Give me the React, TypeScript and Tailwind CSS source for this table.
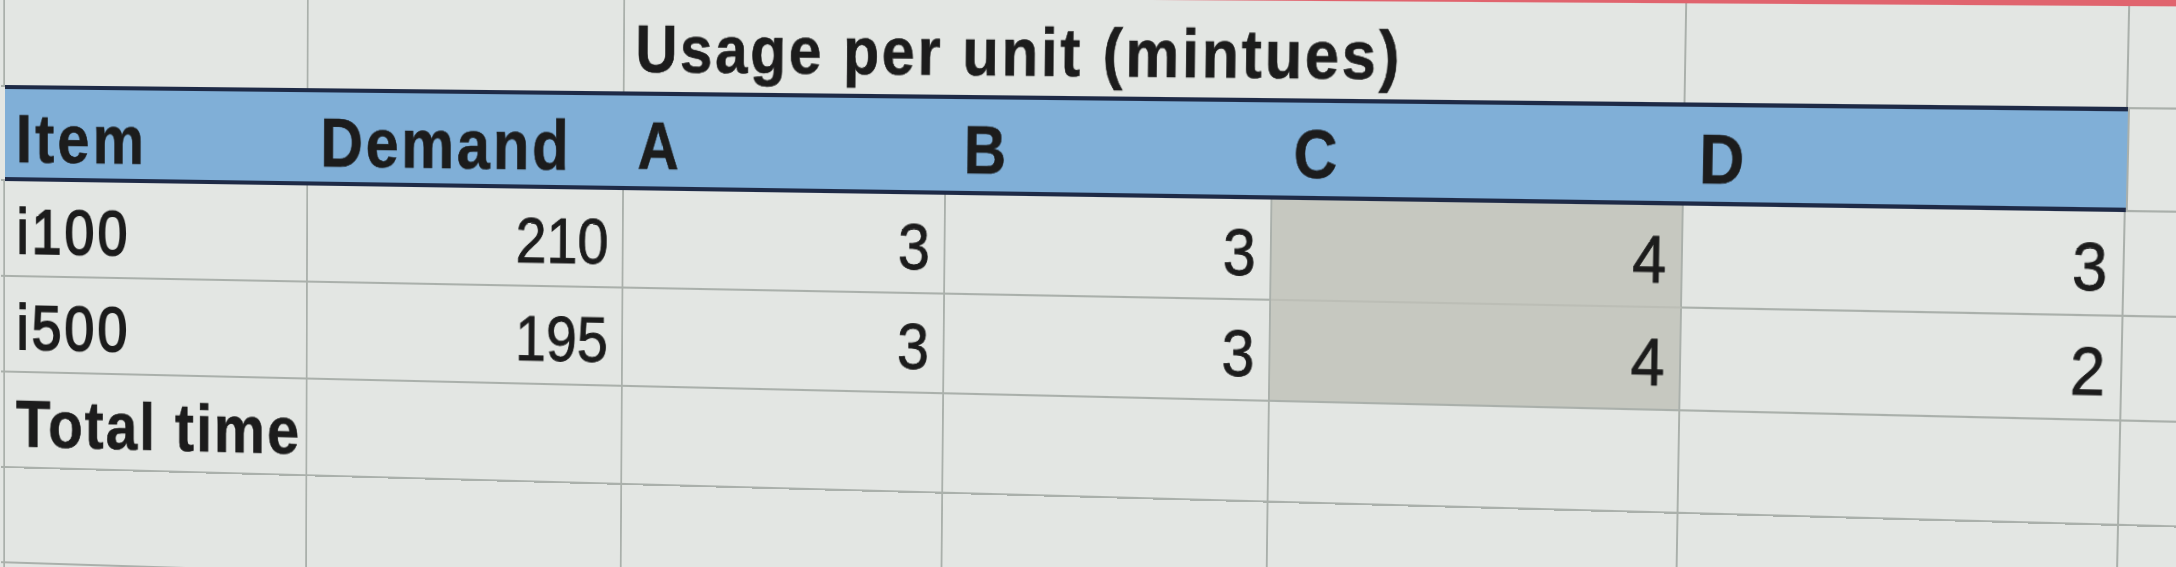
import React from "react";

const line = "border-[#aab0ab]";

function Num({ v, shade = false, w }: { v: string; shade?: boolean; w: string }) {
  return (
    <div
      className={`${w} shrink-0 flex items-end justify-end pr-[15px] pb-[12px] border-r-2 border-b-2 ${line} ${
        shade ? "bg-[#c6c8c0]" : ""
      } text-[63px] leading-none [-webkit-text-stroke:0.8px_#1c1c1c]`}
    >
      {v}
    </div>
  );
}

function Blank({ w, shade = false, noRight = false }: { w: string; shade?: boolean; noRight?: boolean }) {
  return (
    <div
      className={`${w} shrink-0 border-b-2 ${noRight ? "" : "border-r-2"} ${line} ${shade ? "bg-[#c6c8c0]" : ""}`}
    />
  );
}

function BlankRow() {
  return (
    <div className="flex h-[96px]">
      <Blank w="w-[5px]" />
      <Blank w="w-[355px]" />
      <Blank w="w-[360px]" />
      <Blank w="w-[357px]" />
      <Blank w="w-[352px]" />
      <Blank w="w-[430px]" />
      <Blank w="w-[446px]" />
      <Blank w="w-[500px]" />
    </div>
  );
}

export default function App() {
  return (
    <div className="w-[2176px] h-[567px] overflow-hidden bg-[#e3e6e3] font-['Liberation_Sans',Arial,sans-serif] text-[#1c1c1c]">
      <div className="w-[2900px] origin-top-left [transform:matrix3d(0.843962,0.005549,0,-0.0000376306,0.0000507,1.003217,0,0.0000101393,0,0,1,0,0.77925,-40.33808,0,1)] flex flex-col">
        {/* row above title */}
        <div className="flex h-[27px]">
          <div className={`w-[5px] shrink-0 border-r-2 ${line}`} />
          <div className={`w-[355px] shrink-0 border-r-2 ${line}`} />
          <div className={`w-[360px] shrink-0 border-r-2 ${line}`} />
          <div className={`w-[357px] shrink-0 border-r-2 ${line}`} />
          <div className={`w-[352px] shrink-0 border-r-2 ${line}`} />
          <div className={`w-[430px] shrink-0 border-r-2 ${line}`} />
          <div className={`w-[446px] shrink-0 border-r-2 ${line}`} />
          <div className="w-[500px] shrink-0" />
        </div>
        {/* red edge */}
        <div className="h-[6px] bg-[#e0646e]" />
        {/* title row */}
        <div className="flex h-[92px]">
          <div className={`w-[5px] shrink-0 border-r-2 ${line}`} />
          <div className={`w-[355px] shrink-0 border-r-2 ${line}`} />
          <div className={`w-[360px] shrink-0 border-r-2 ${line}`} />
          <div className="w-[357px] shrink-0 flex items-end pl-[12px] pb-[9px] whitespace-nowrap text-[65px] font-bold leading-none tracking-[0.045em] [-webkit-text-stroke:0.6px_#1c1c1c]">
            Usage per unit (mintues)
          </div>
          <div className="w-[352px] shrink-0" />
          <div className={`w-[430px] shrink-0 border-r-2 ${line}`} />
          <div className={`w-[446px] shrink-0 border-r-2 ${line}`} />
          <div className="w-[500px] shrink-0" />
        </div>
        {/* header band */}
        <div className="flex h-[96px]">
          <div className={`w-[5px] shrink-0 border-y-2 ${line}`} />
          <div className="w-[2300px] shrink-0 flex bg-[#80afd7] border-y-4 border-[#1e2a46] font-bold leading-none [-webkit-text-stroke:0.6px_#1c1c1c]">
            <div className="w-[355px] shrink-0 flex items-end pl-[13px] pb-[5px] text-[68px] tracking-[0.055em]">Item</div>
            <div className="w-[360px] shrink-0 flex items-end pl-[14px] pb-[5px] text-[68px] tracking-[0.045em]">Demand</div>
            <div className="w-[357px] shrink-0 flex items-end pl-[15px] pb-[7px] text-[64px]">A</div>
            <div className="w-[352px] shrink-0 flex items-end pl-[19px] pb-[7px] text-[64px]">B</div>
            <div className="w-[430px] shrink-0 flex items-end pl-[22px] pb-[7px] text-[64px]">C</div>
            <div className="w-[446px] shrink-0 flex items-end pl-[15px] pb-[7px] text-[64px]">D</div>
          </div>
          <div className={`w-[500px] shrink-0 border-y-2 border-l-2 ${line}`} />
        </div>
        {/* i100 */}
        <div className="flex h-[96px]">
          <Blank w="w-[5px]" />
          <div className={`w-[355px] shrink-0 flex items-end pl-[14px] pb-[12px] border-r-2 border-b-2 ${line} text-[63px] leading-none tracking-[0.06em] [-webkit-text-stroke:2px_#1c1c1c]`}>
            i100
          </div>
          <Num w="w-[360px]" v="210" />
          <Num w="w-[357px]" v="3" />
          <Num w="w-[352px]" v="3" />
          <div className="w-[430px] shrink-0 flex items-end justify-end pr-[15px] pb-[12px] border-r-2 border-b-2 border-b-[#bcbeb6] border-r-[#aab0ab] bg-[#c6c8c0] text-[63px] leading-none [-webkit-text-stroke:0.8px_#1c1c1c]">
            4
          </div>
          <Num w="w-[446px]" v="3" />
          <Blank w="w-[500px]" />
        </div>
        {/* i500 */}
        <div className="flex h-[96px]">
          <Blank w="w-[5px]" />
          <div className={`w-[355px] shrink-0 flex items-end pl-[14px] pb-[12px] border-r-2 border-b-2 ${line} text-[63px] leading-none tracking-[0.06em] [-webkit-text-stroke:2px_#1c1c1c]`}>
            i500
          </div>
          <Num w="w-[360px]" v="195" />
          <Num w="w-[357px]" v="3" />
          <Num w="w-[352px]" v="3" />
          <Num w="w-[430px]" v="4" shade />
          <Num w="w-[446px]" v="2" />
          <Blank w="w-[500px]" />
        </div>
        {/* Total time */}
        <div className="flex h-[96px]">
          <Blank w="w-[5px]" />
          <div className={`w-[355px] shrink-0 flex items-end pl-[13px] pb-[10px] border-r-2 border-b-2 ${line} text-[67px] font-bold leading-none whitespace-nowrap tracking-[0.035em] [-webkit-text-stroke:0.6px_#1c1c1c]`}>
            Total time
          </div>
          <Blank w="w-[360px]" />
          <Blank w="w-[357px]" />
          <Blank w="w-[352px]" />
          <Blank w="w-[430px]" />
          <Blank w="w-[446px]" />
          <Blank w="w-[500px]" />
        </div>
        <BlankRow />
        <BlankRow />
      </div>
    </div>
  );
}
